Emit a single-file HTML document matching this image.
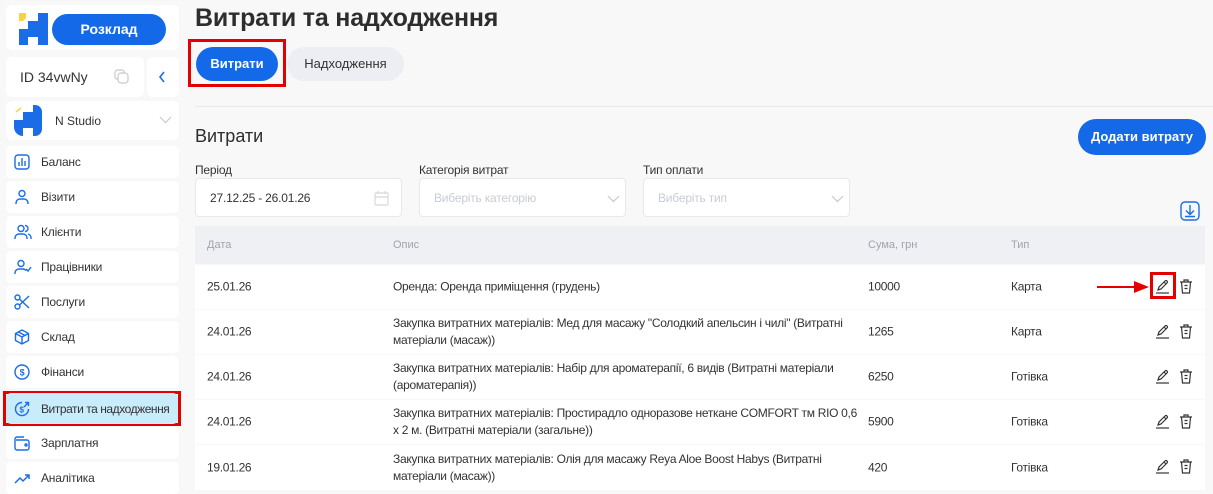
<!DOCTYPE html>
<html><head><meta charset="utf-8"><style>
*{box-sizing:border-box;margin:0;padding:0}
body{width:1213px;height:490px;overflow:hidden;background:#f8f8f9;font-family:"Liberation Sans",sans-serif;color:#333;position:relative}
.a{position:absolute}
.card{position:absolute;background:#fff;border-radius:6px}
.nav{position:absolute;left:6px;width:173px;height:32px;background:#fff;border-radius:5px;font-size:12px;color:#333;display:flex;align-items:center;padding-left:35px;letter-spacing:-0.2px;white-space:nowrap}
.nav svg{position:absolute;left:8px;top:8px}
.inp{position:absolute;top:178px;height:39px;width:207px;background:#fff;border:1px solid #e6e8ec;border-radius:4px;font-size:12px;display:flex;align-items:center;padding-left:14px;letter-spacing:-0.2px}
.lbl{position:absolute;top:163px;font-size:12px;color:#333;letter-spacing:-0.2px}
.row{position:absolute;left:195px;width:1010px;height:44px;background:#fff;font-size:12px;letter-spacing:-0.3px;color:#333}
.row div{position:absolute;top:50%;transform:translateY(-50%);line-height:17px}
</style></head><body>
<!-- sidebar -->
<div class="card" style="left:6px;top:5px;width:173px;height:45px"></div>
<svg class="a" style="left:19px;top:13px" width="29" height="32" viewBox="0 0 29 32"><path d="M0 0h7v5a6 6 0 0 1-7 3z" fill="#f7d342"/><rect x="0" y="16" width="9" height="16" fill="#1a6de6"/><rect x="9" y="8" width="10" height="16" fill="#1a6de6"/><rect x="19" y="0" width="10" height="32" fill="#1a6de6"/><rect x="9" y="24" width="10" height="8" fill="#fff"/></svg>
<div class="a" style="left:52px;top:14px;width:114px;height:31px;background:#1469e8;border-radius:16px;color:#fff;font-weight:bold;font-size:14px;text-align:center;line-height:31px">Розклад</div>
<div class="card" style="left:6px;top:57px;width:138px;height:40px;font-size:14px;padding:12px 0 0 14px">ID 34vwNy</div>
<svg class="a" style="left:114px;top:69px" width="16" height="16" viewBox="0 0 16 16" fill="none" stroke="#c5c8cd" stroke-width="1.2"><rect x="4" y="4" width="10" height="10" rx="3"/><path d="M10 4V3a2 2 0 0 0-2-2H4a3 3 0 0 0-3 3v4a2 2 0 0 0 2 2h1"/></svg>
<div class="card" style="left:147px;top:57px;width:32px;height:40px"></div>
<svg class="a" style="left:158px;top:71px" width="8" height="12" viewBox="0 0 8 12"><path d="M6 1L2 6l4 5" stroke="#1a6de6" stroke-width="1.6" fill="none"/></svg>
<div class="card" style="left:6px;top:101px;width:173px;height:39px;font-size:12px;padding:13px 0 0 49px">N Studio</div>
<svg class="a" style="left:14px;top:105px" width="28" height="31" viewBox="0 0 28 31"><path d="M2 7l5-4" stroke="#f7d342" stroke-width="1.5"/><path d="M0 15h9v16a9 9 0 0 1-9-9z" fill="#1a6de6"/><rect x="9" y="7" width="10" height="16" fill="#1a6de6"/><path d="M19 0h2a7 7 0 0 1 7 7v17a7 7 0 0 1-7 7h-2z" fill="#1a6de6"/></svg>
<svg class="a" style="left:159px;top:116px" width="13" height="8" viewBox="0 0 13 8"><path d="M1 1l5.5 5.5L12 1" stroke="#c5c8cd" stroke-width="1.2" fill="none"/></svg>

<div class="nav" style="top:146px"><svg width="16" height="16" viewBox="0 0 16 16" fill="none" stroke="#1a6de6" stroke-width="1.4"><rect x="1" y="1" width="14" height="14" rx="3"/><path d="M5 12V8M8 12V4M11 12V7"/></svg>Баланс</div>
<div class="nav" style="top:181px"><svg width="16" height="16" viewBox="0 0 16 16" fill="none" stroke="#1a6de6" stroke-width="1.4"><circle cx="8" cy="4.5" r="3"/><path d="M2 15v-1a4 4 0 0 1 4-4h4a4 4 0 0 1 4 4v1"/></svg>Візити</div>
<div class="nav" style="top:216px"><svg width="18" height="16" viewBox="0 0 18 16" fill="none" stroke="#1a6de6" stroke-width="1.4"><circle cx="7" cy="4.5" r="3"/><path d="M1 15v-1a4 4 0 0 1 4-4h4a4 4 0 0 1 4 4v1M11 1.5a3 3 0 0 1 0 6M14 10a4 4 0 0 1 3 4v1"/></svg>Клієнти</div>
<div class="nav" style="top:251px"><svg width="18" height="16" viewBox="0 0 18 16" fill="none" stroke="#1a6de6" stroke-width="1.4"><circle cx="7" cy="4.5" r="3"/><path d="M1 15v-1a4 4 0 0 1 4-4h4a4 4 0 0 1 3 1.5M12 10l2 2 3-4"/></svg>Працівники</div>
<div class="nav" style="top:286px"><svg width="16" height="16" viewBox="0 0 16 16" fill="none" stroke="#1a6de6" stroke-width="1.4"><circle cx="3.5" cy="3.5" r="2.5"/><circle cx="3.5" cy="12.5" r="2.5"/><path d="M5.5 5L15 14M5.5 11L15 2"/></svg>Послуги</div>
<div class="nav" style="top:321px"><svg width="16" height="16" viewBox="0 0 16 16" fill="none" stroke="#1a6de6" stroke-width="1.4"><path d="M8 1l6.5 3.5v7L8 15l-6.5-3.5v-7zM1.5 4.5L8 8l6.5-3.5M8 8v7M4.5 3l6.5 3.5"/></svg>Склад</div>
<div class="nav" style="top:356px"><svg width="16" height="16" viewBox="0 0 16 16" fill="none" stroke="#1a6de6" stroke-width="1.4"><circle cx="8" cy="8" r="7"/><text x="8" y="11.5" font-size="9" font-weight="bold" fill="#1a6de6" stroke="none" text-anchor="middle" font-family="Liberation Sans">$</text></svg>Фінанси</div>
<div class="a" style="left:3px;top:391px;width:178px;height:35px;border:3px solid #e50000"></div>
<div class="nav" style="top:393px;left:6px;width:172px;height:31px;background:#c9ecfa;letter-spacing:-0.45px"><svg width="16" height="16" viewBox="0 0 16 16" fill="none" stroke="#1a6de6" stroke-width="1.4"><path d="M14.5 8A6.5 6.5 0 1 1 8 1.5"/><path d="M11 1.5h3.5V5M14.5 1.5L10 6"/><text x="7.5" y="11.5" font-size="8" font-weight="bold" fill="#1a6de6" stroke="none" text-anchor="middle" font-family="Liberation Sans">$</text></svg>Витрати та надходження</div>
<div class="nav" style="top:427px"><svg width="16" height="16" viewBox="0 0 16 16" fill="none" stroke="#1a6de6" stroke-width="1.4"><path d="M2 5h11a2 2 0 0 1 2 2v6a2 2 0 0 1-2 2H3a2 2 0 0 1-2-2V4a2 2 0 0 1 2-2h7"/><circle cx="12" cy="10" r="1"/></svg>Зарплатня</div>
<div class="nav" style="top:462px"><svg width="16" height="16" viewBox="0 0 16 16" fill="none" stroke="#1a6de6" stroke-width="1.5"><path d="M1 13l5-5 3 3 6-6M11 5h4v4"/></svg>Аналітика</div>

<!-- main -->
<div class="a" style="left:195px;top:4px;font-size:25px;font-weight:bold;color:#2d2d2d;letter-spacing:-0.2px">Витрати та надходження</div>
<div class="a" style="left:188px;top:39px;width:98px;height:48px;border:3px solid #e50000"></div>
<div class="a" style="left:196px;top:47px;width:82px;height:34px;background:#1469e8;border-radius:17px;color:#fff;font-weight:bold;font-size:13px;text-align:center;line-height:34px">Витрати</div>
<div class="a" style="left:287px;top:47px;width:117px;height:34px;background:#eceef3;border-radius:17px;color:#333;font-size:13px;text-align:center;line-height:34px">Надходження</div>
<div class="a" style="left:195px;top:106px;width:1018px;height:1px;background:#e8e9ec"></div>
<div class="a" style="left:195px;top:126px;font-size:18px;color:#2d2d2d">Витрати</div>
<div class="a" style="left:1078px;top:119px;width:128px;height:36px;background:#1469e8;border-radius:18px;color:#fff;font-weight:bold;font-size:13px;text-align:center;line-height:36px">Додати витрату</div>
<div class="lbl" style="left:195px">Період</div>
<div class="lbl" style="left:419px">Категорія витрат</div>
<div class="lbl" style="left:643px">Тип оплати</div>
<div class="inp" style="left:195px">27.12.25 - 26.01.26
<svg class="a" style="left:178px;top:11px" width="15" height="16" viewBox="0 0 15 16" fill="none" stroke="#d5d8dd" stroke-width="1.2"><rect x="1" y="3" width="13" height="12" rx="1"/><path d="M1 7h13M4 1v3M11 1v3"/></svg></div>
<div class="inp" style="left:419px;color:#c8ccd4">Виберіть категорію
<svg class="a" style="left:187px;top:16px" width="13" height="8" viewBox="0 0 13 8"><path d="M1 1l5.5 5.5L12 1" stroke="#c5c8cd" stroke-width="1.2" fill="none"/></svg></div>
<div class="inp" style="left:643px;color:#c8ccd4">Виберіть тип
<svg class="a" style="left:187px;top:16px" width="13" height="8" viewBox="0 0 13 8"><path d="M1 1l5.5 5.5L12 1" stroke="#c5c8cd" stroke-width="1.2" fill="none"/></svg></div>
<svg class="a" style="left:1180px;top:201px" width="20" height="20" viewBox="0 0 20 20" fill="none" stroke="#1a6de6" stroke-width="1.4"><rect x="1" y="1" width="18" height="18" rx="4"/><path d="M10 4v9M6 9.5l4 4 4-4M5 15.5h10"/></svg>

<div class="a" style="left:195px;top:226px;width:1010px;height:38px;background:#eef0f4;font-size:11px;color:#a0a4ab">
<span class="a" style="left:12px;top:13px">Дата</span><span class="a" style="left:198px;top:13px">Опис</span><span class="a" style="left:673px;top:13px">Сума, грн</span><span class="a" style="left:816px;top:13px">Тип</span></div>

<div class="row" style="top:265px"><div style="left:12px">25.01.26</div><div style="left:198px">Оренда: Оренда приміщення (грудень)</div><div style="left:673px">10000</div><div style="left:816px">Карта</div></div>
<div class="row" style="top:310px"><div style="left:12px">24.01.26</div><div style="left:198px">Закупка витратних матеріалів: Мед для масажу "Солодкий апельсин і чилі" (Витратні<br>матеріали (масаж))</div><div style="left:673px">1265</div><div style="left:816px">Карта</div></div>
<div class="row" style="top:355px"><div style="left:12px">24.01.26</div><div style="left:198px">Закупка витратних матеріалів: Набір для ароматерапії, 6 видів (Витратні матеріали<br>(ароматерапія))</div><div style="left:673px">6250</div><div style="left:816px">Готівка</div></div>
<div class="row" style="top:400px"><div style="left:12px">24.01.26</div><div style="left:198px">Закупка витратних матеріалів: Простирадло одноразове неткане COMFORT тм RIO 0,6<br>х 2 м. (Витратні матеріали (загальне))</div><div style="left:673px">5900</div><div style="left:816px">Готівка</div></div>
<div class="row" style="top:445px;height:45px"><div style="left:12px">19.01.26</div><div style="left:198px">Закупка витратних матеріалів: Олія для масажу Reya Aloe Boost Habys (Витратні<br>матеріали (масаж))</div><div style="left:673px">420</div><div style="left:816px">Готівка</div></div>

<svg width="0" height="0" style="position:absolute"><defs>
<g id="pen" fill="none" stroke="#333" stroke-width="1.2"><path d="M3 11l1-3 6-6a1.4 1.4 0 0 1 2 2l-6 6z M9 3l2 2"/><path d="M1 14h13"/></g>
<g id="bin" fill="none" stroke="#333" stroke-width="1.2"><path d="M1 3h12M5 3V1h4v2M2.5 3l1 11h7l1-11M5.5 6.5h3M5.5 9.5h3"/></g></defs></svg>
<svg class="a" style="left:1155px;top:279px" width="15" height="15"><use href="#pen"/></svg><svg class="a" style="left:1179px;top:279px" width="14" height="15"><use href="#bin"/></svg>
<svg class="a" style="left:1155px;top:324px" width="15" height="15"><use href="#pen"/></svg><svg class="a" style="left:1179px;top:324px" width="14" height="15"><use href="#bin"/></svg>
<svg class="a" style="left:1155px;top:369px" width="15" height="15"><use href="#pen"/></svg><svg class="a" style="left:1179px;top:369px" width="14" height="15"><use href="#bin"/></svg>
<svg class="a" style="left:1155px;top:414px" width="15" height="15"><use href="#pen"/></svg><svg class="a" style="left:1179px;top:414px" width="14" height="15"><use href="#bin"/></svg>
<svg class="a" style="left:1155px;top:459px" width="15" height="15"><use href="#pen"/></svg><svg class="a" style="left:1179px;top:459px" width="14" height="15"><use href="#bin"/></svg>
<div class="a" style="left:1150px;top:272px;width:26px;height:27px;border:3px solid #e50000"></div>
<div class="a" style="left:1097px;top:286px;width:40px;height:2px;background:#e50000"></div>
<svg class="a" style="left:1134px;top:281px" width="15" height="12"><path d="M0 0l15 6-15 6z" fill="#e50000"/></svg>
</body></html>
